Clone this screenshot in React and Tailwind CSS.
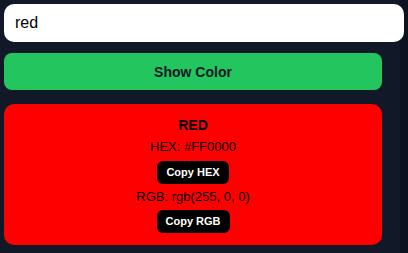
import { useState } from "react";

export default function App() {
  const [value, setValue] = useState("red");

  return (
    <div
      className="flex w-[408px] h-[253px] bg-[#111827] overflow-hidden"
      style={{ fontFamily: '"Liberation Sans", Arial, sans-serif' }}
    >
      <div className="flex flex-col w-[400px] shrink-0 pl-1 pt-1">
        {/* Input */}
        <input
          value={value}
          onChange={(e) => setValue(e.target.value)}
          className="w-[400px] h-[38px] rounded-[10px] bg-white px-[11px] text-base text-black outline-none relative z-10"
        />

        {/* Show button */}
        <button className="mt-[11px] w-[378px] h-[37px] rounded-lg bg-[#22c55e] text-sm font-bold text-[#111827]">
          Show Color
        </button>

        {/* Result card */}
        <div className="mt-[14px] w-[378px] h-[141px] rounded-[10px] bg-[#ff0000] flex flex-col items-center pt-[12px] text-black">
          <p className="text-[14px] font-bold leading-[18px]">RED</p>
          <p className="mt-[4px] text-[13px] leading-[18px]">HEX: #FF0000</p>
          <button className="mt-[5px] h-[23px] px-[9px] rounded-md bg-black text-white text-[11px] font-bold">
            Copy HEX
          </button>
          <p className="mt-[4px] text-[13px] leading-[18px]">RGB: rgb(255, 0, 0)</p>
          <button className="mt-[4px] h-[23px] px-[9px] rounded-md bg-black text-white text-[11px] font-bold">
            Copy RGB
          </button>
        </div>
      </div>

      {/* Right edge strip */}
      <div className="w-2 shrink-0 bg-[#0c1220]"></div>
    </div>
  );
}
